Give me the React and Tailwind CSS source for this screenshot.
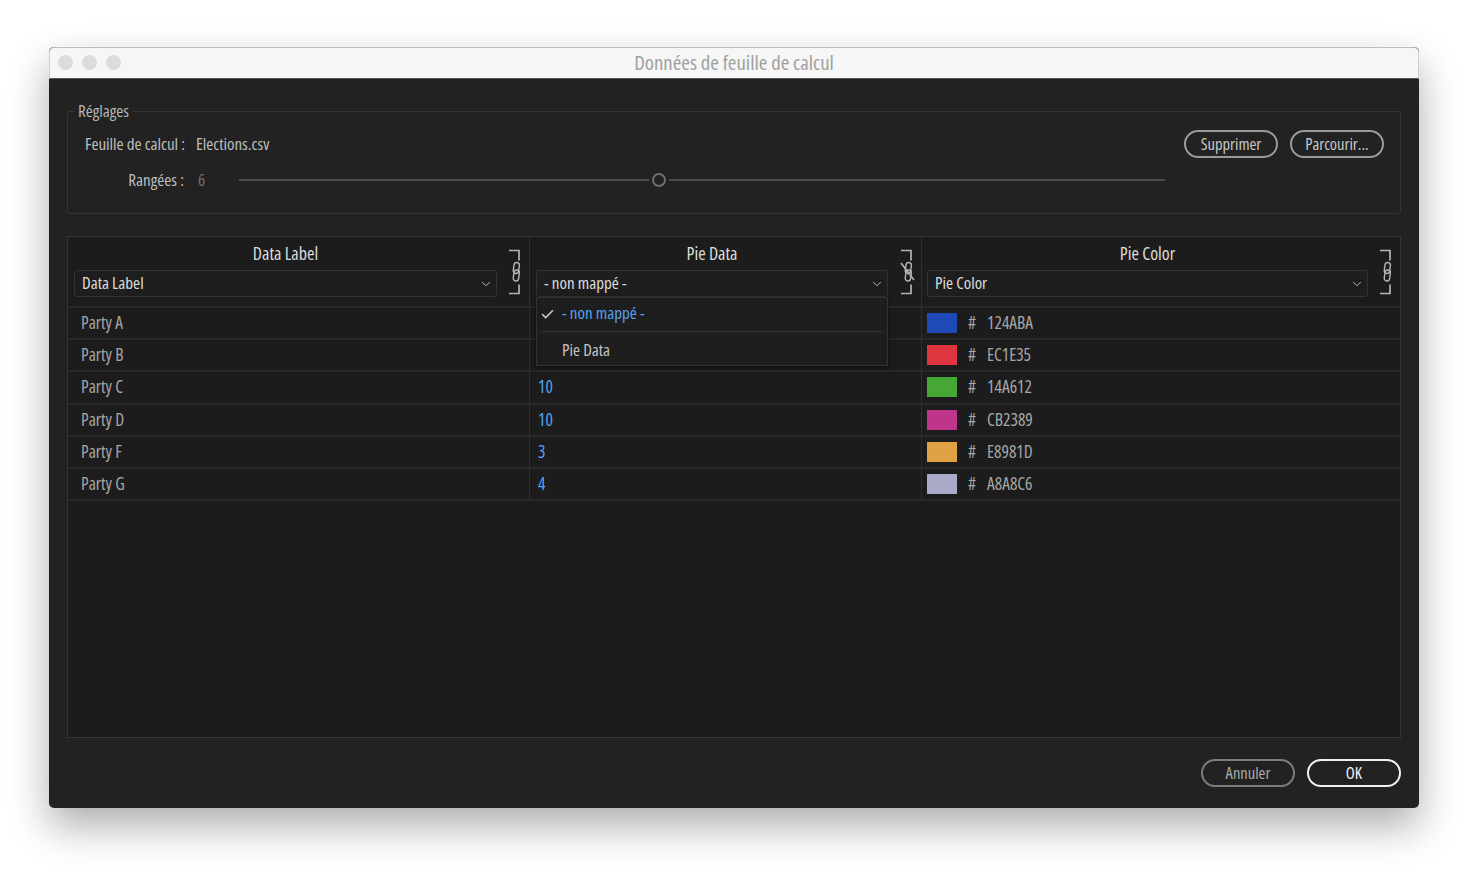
import { Check, ChevronDown } from "lucide-react";

const rows = [
  { label: "Party A", value: "", color: "124ABA", swatch: "bg-[#2049b8]" },
  { label: "Party B", value: "", color: "EC1E35", swatch: "bg-[#df3540]" },
  { label: "Party C", value: "10", color: "14A612", swatch: "bg-[#46a735]" },
  { label: "Party D", value: "10", color: "CB2389", swatch: "bg-[#bf358b]" },
  { label: "Party F", value: "3", color: "E8981D", swatch: "bg-[#e0a044]" },
  { label: "Party G", value: "4", color: "A8A8C6", swatch: "bg-[#a9a9c8]" },
];

function LinkBracket({ broken }) {
  return (
    <svg width="14" height="46" viewBox="0 0 14 46" fill="none" stroke="#b4b4b4" className="shrink-0 overflow-visible">
      <path d="M2 1.5h10v10M2 44.5h10v-9" strokeWidth="1.7" />
      <rect x="6.6" y="13.5" width="5.4" height="11" rx="2.7" strokeWidth="1.4" transform="rotate(8 9.3 19)" />
      <rect x="6.6" y="21" width="5.4" height="11" rx="2.7" strokeWidth="1.4" transform="rotate(8 9.3 26.5)" />
      {broken && <path d="M2 14l13 17" strokeWidth="1.6" />}
    </svg>
  );
}

function Select({ value }) {
  return (
    <div className="w-full h-[27px] flex items-center justify-between pl-[7px] pr-[3px] border border-[#333] rounded-[3px] bg-[#1e1e1e] text-[#dcdcdc] text-[17px]">
      <span className="pb-[2px]">{value}</span>
      <ChevronDown size={14} strokeWidth={1.6} className="text-[#c4c4c4]" />
    </div>
  );
}

function ColumnHead({ title, value, broken, className }) {
  return (
    <div className={"flex items-end h-[69px] pt-[4px] pb-[9px] " + className}>
      <div className="flex-1 flex flex-col gap-[5px]">
        <div className="text-center text-[#dcdcdc] text-[18px] h-[24px] leading-[24px]">{title}</div>
        <Select value={value} />
      </div>
      <div className="mb-[2px]">
        <LinkBracket broken={broken} />
      </div>
    </div>
  );
}

function PillButton({ children, primary, dim }) {
  return (
    <button
      className={
        "w-[94px] h-[28px] rounded-full border-2 flex items-center justify-center text-[16.5px] " +
        (primary
          ? "border-[#f0f0f0] text-[#f4f4f4]"
          : dim
          ? "border-[#7c7c7c] text-[#a8a8a8]"
          : "border-[#9a9a9a] text-[#c8c8c8]")
      }
    >
      {children}
    </button>
  );
}

export default function App() {
  return (
    <div className="w-[1468px] h-[878px] overflow-hidden bg-white pt-[47px] pl-[49px] font-['Open_Sans',sans-serif] [font-stretch:75%] text-[17px]">
      <div className="w-[1370px] h-[761px] rounded-[5px] overflow-hidden bg-[#222222] shadow-[0_18px_40px_rgba(0,0,0,0.33)] flex flex-col">
        <div className="relative h-[32px] shrink-0 bg-[#f6f6f6] border-t border-x border-t-[#bdbdbd] border-x-[#d0d0d0] border-b border-b-[#555] rounded-t-[5px] flex items-center justify-center text-[#a0a0a0] text-[20.8px]">
          <div className="absolute left-[8px] top-[7px] flex gap-[9px]">
            <span className="w-[15px] h-[15px] rounded-full bg-[#dcdcdc]"></span>
            <span className="w-[15px] h-[15px] rounded-full bg-[#dcdcdc]"></span>
            <span className="w-[15px] h-[15px] rounded-full bg-[#dcdcdc]"></span>
          </div>
          Données de feuille de calcul
        </div>

        <div className="flex-1 flex flex-col px-[18px] pt-[22px]">
          <fieldset className="h-[113px] border border-[#343434] rounded-[2px] px-[17px] text-[#bdbdbd]">
            <legend className="-ml-[10px] px-[3px] text-[#b4b4b4] leading-[20px]">Réglages</legend>
            <div className="flex items-center h-[28px] mt-[9px]">
              <span className="w-[99px] text-right whitespace-nowrap">Feuille de calcul :</span>
              <span className="ml-3 flex-1">Elections.csv</span>
              <div className="flex gap-3 -mr-[1px]">
                <PillButton>Supprimer</PillButton>
                <PillButton>Parcourir...</PillButton>
              </div>
            </div>
            <div className="flex items-center h-[20px] mt-[11.5px]">
              <span className="w-[99px] text-right">Rangées :</span>
              <span className="ml-[14px] w-[41px] text-[#6e6e6e]">6</span>
              <div className="w-[926px] flex items-center">
                <div className="flex-1 h-[2px] bg-[#4e4e4e]"></div>
                <div className="w-[14px] h-[14px] mx-[3px] rounded-full border-2 border-[#6e6e6e]"></div>
                <div className="w-[496px] h-[2px] bg-[#4e4e4e]"></div>
              </div>
            </div>
          </fieldset>

          <div className="mt-[22px] h-[502px] border border-[#343434] bg-[#1c1c1c] flex items-start">
            <div className="w-[462px] border-r border-[#2e2e2e]">
              <ColumnHead title="Data Label" value="Data Label" className="pl-1.5 pr-2 gap-[10px]" />
              {rows.map((r) => (
                <div key={r.label} className="h-[32.2px] border-t-2 border-[#282828] flex items-center pl-[13px] pb-[2px] text-[#a6a6a6] text-[17.5px]">
                  {r.label}
                </div>
              ))}
              <div className="h-[2px] bg-[#282828]"></div>
            </div>

            <div className="relative w-[392px] border-r border-[#2e2e2e]">
              <ColumnHead title="Pie Data" value="- non mappé -" broken className="pl-1.5 pr-2 gap-[11px]" />
              {rows.map((r) => (
                <div key={r.label} className="h-[32.2px] border-t-2 border-[#282828] flex items-center pl-[8px] pb-[2px] text-[#55a2f0] text-[17.5px]">
                  {r.value}
                </div>
              ))}
              <div className="h-[2px] bg-[#282828]"></div>

              {/* open dropdown */}
              <div className="absolute left-[6px] top-[60px] w-[352px] h-[69px] bg-[#1e1e1e] border border-[#333] shadow-[0_2px_6px_rgba(0,0,0,0.5)]">
                <div className="h-[34px] mx-[4px] flex items-center border-b border-[#333] text-[#55a2f0]">
                  <Check size={15} strokeWidth={2.6} className="text-[#c8c8c8] -ml-[1px] mr-[7px]" />
                  <span className="pb-[4px]">- non mappé -</span>
                </div>
                <div className="h-[33px] flex items-center pl-[25px] pt-[3px] text-[#c4c4c4]">Pie Data</div>
              </div>
            </div>

            <div className="flex-1">
              <ColumnHead title="Pie Color" value="Pie Color" className="pl-[5px] pr-[8px] gap-[10px]" />
              {rows.map((r) => (
                <div key={r.label} className="h-[32.2px] border-t-2 border-[#282828] flex items-center pl-[5px] text-[#a6a6a6] text-[17.5px]">
                  <span className={"w-[30px] h-[20px] " + r.swatch}></span>
                  <span className="ml-[11px] w-[19px] pb-[2px]">#</span>
                  <span className="pb-[2px]">{r.color}</span>
                </div>
              ))}
              <div className="h-[2px] bg-[#282828]"></div>
            </div>
          </div>

          <div className="flex justify-end gap-3 mt-[21px]">
            <PillButton dim>Annuler</PillButton>
            <PillButton primary>OK</PillButton>
          </div>
        </div>
      </div>
    </div>
  );
}
